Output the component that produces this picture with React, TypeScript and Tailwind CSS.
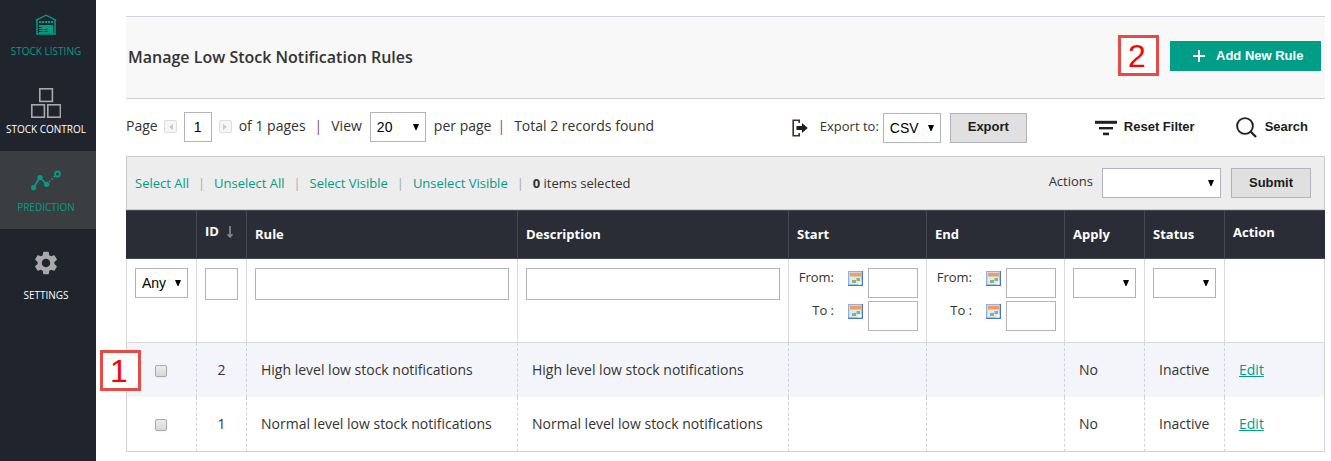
import React from "react";
import { MdSettings } from "react-icons/md";

function WarehouseIcon() {
  return (
    <svg width="22" height="21" viewBox="0 0 22 21" fill="none" stroke="currentColor" aria-hidden="true">
      <path d="M0.8 6.4 11 1.2 21.2 6.4" strokeWidth="1.4" />
      <path d="M2 6v14h18V6" strokeWidth="1.5" />
      <path d="M4 8h14" strokeWidth="2" strokeDasharray="2.2 0.8" />
      <path d="M4 11h14v8.5H4z" fill="currentColor" stroke="none" />
      <path d="M4 13.5h3M4 15.5h4M9 15.5h4M4 17.5h4M9 17.5h4" stroke="#20242d" strokeWidth="1" />
    </svg>
  );
}

function BoxesIcon() {
  return (
    <svg width="30" height="30" viewBox="0 0 30 30" fill="none" stroke="#a9a9a9" strokeWidth="1.6" aria-hidden="true">
      <rect x="8.8" y="0.8" width="12.6" height="12.6" />
      <rect x="0.8" y="16.8" width="12.6" height="12.4" />
      <rect x="16.8" y="16.8" width="12.6" height="12.4" />
    </svg>
  );
}

function PredictionIcon() {
  return (
    <svg width="30" height="21" viewBox="0 0 30 21" fill="none" stroke="currentColor" aria-hidden="true">
      <path d="M2.6 17.6 9 7.5l6.6 7" strokeWidth="1.8" />
      <path d="M15.6 14.5 24 6" strokeWidth="1.8" strokeDasharray="1.6 1.8" />
      <circle cx="2.6" cy="17.6" r="2.6" fill="currentColor" stroke="none" />
      <circle cx="9" cy="7.5" r="2.6" fill="currentColor" stroke="none" />
      <circle cx="15.6" cy="14.3" r="2.6" fill="currentColor" stroke="none" />
      <circle cx="26.5" cy="4" r="2.5" strokeWidth="1.8" />
    </svg>
  );
}

function ExportIcon() {
  return (
    <svg width="16" height="18" viewBox="0 0 16 18" fill="none" aria-hidden="true">
      <path d="M7.2 4V1.2H1.2v15.6h6V14" stroke="#3a3427" strokeWidth="1.6" />
      <path d="M4.5 7H10V4L15.8 9 10 14v-3H4.5z" fill="#231f20" />
    </svg>
  );
}

function FilterIcon() {
  return (
    <svg width="22" height="16" viewBox="0 0 22 16" fill="#231f20" aria-hidden="true">
      <rect x="0" y="0.8" width="22" height="3" />
      <rect x="4" y="7" width="14" height="2.4" />
      <rect x="8" y="12.6" width="6" height="2.6" />
    </svg>
  );
}

function SearchIcon() {
  return (
    <svg width="21" height="21" viewBox="0 0 21 21" fill="none" stroke="#231f20" aria-hidden="true">
      <circle cx="9" cy="9" r="7.9" strokeWidth="1.9" />
      <path d="M14.3 14.3 20 20" strokeWidth="2.3" />
    </svg>
  );
}

function CalendarIcon() {
  return (
    <svg width="15" height="15" viewBox="0 0 15 15" aria-hidden="true">
      <rect x="0.5" y="0.5" width="14" height="14" fill="#c6d9f2" stroke="#8fb1e0" />
      <path d="M0 14.4h15M14.4 0v15" stroke="#4a78bd" strokeWidth="1.2" />
      <rect x="2" y="2" width="11" height="11" fill="#dfe9f7" />
      <rect x="2" y="2" width="11" height="3.5" fill="#fb9a5b" />
      <rect x="8.5" y="7" width="3.5" height="3" fill="#7fba77" />
      <rect x="4" y="9" width="4" height="3" fill="#7fba77" />
      <path d="M9.5 13.5 13.5 9.5v4z" fill="#f4f8fd" />
    </svg>
  );
}

function SortArrow() {
  return (
    <svg width="6" height="12" viewBox="0 0 6 12" fill="none" stroke="#8a909c" aria-hidden="true">
      <path d="M3 0v11" strokeWidth="1.6" />
      <path d="M0.5 8.3 3 11l2.5-2.7" strokeWidth="1.4" />
    </svg>
  );
}

const control =
  "border border-[#b1b3bf] bg-white font-['Liberation_Sans',sans-serif] text-sm text-black outline-none focus:border-[#009d87]";

function Select({ label, id, options, className = "" }: { label?: string; id?: string; options: string[]; className?: string }) {
  return (
    <div className={`relative ${className}`}>
      <select id={id} aria-label={label} className={`${control} h-[30px] w-full appearance-none rounded-none pl-1.5 pr-4`}>
        {options.map((o) => (
          <option key={o}>{o}</option>
        ))}
      </select>
      <svg className="pointer-events-none absolute right-[7px] top-3" width="6" height="6" viewBox="0 0 6 6" aria-hidden="true">
        <path d="M0 0h6L3.5 6h-1z" fill="#000" />
      </svg>
    </div>
  );
}

function PagerButton({ label, dir }: { label: string; dir: "prev" | "next" }) {
  return (
    <button aria-label={label} className="flex size-[13px] items-center justify-center rounded-xs border border-[#dedede] bg-[#f6f6f6]">
      <svg width="5" height="6" viewBox="0 0 5 6" aria-hidden="true">
        <path d={dir === "prev" ? "M5 0v6L1 3z" : "M0 0v6l4-3z"} fill="#c9c9c9" />
      </svg>
    </button>
  );
}

const greyButton =
  "h-[30px] border border-[#b1b3bf] bg-[#e0e0e0] text-center font-['Liberation_Sans',sans-serif] text-[13px] font-bold text-[#1c1c1c]";
const plainButton = "flex items-center font-['Liberation_Sans',sans-serif] text-[13px] font-bold text-[#1c1c1c]";

function Callout({ n }: { n: number }) {
  return (
    <span className="flex size-[41px] items-center justify-center border-3 border-[#e84b45] bg-white pr-[3px] font-['Liberation_Sans',sans-serif] text-[32px] leading-none text-[#ff0000]">
      {n}
    </span>
  );
}

function NavItem({ icon, label, className }: { icon: React.ReactNode; label: string; className: string }) {
  return (
    <a href="#" className={`flex flex-col items-center justify-end pb-3.5 pr-1 ${className}`}>
      {icon}
      <span className="text-[10px] leading-4">{label}</span>
    </a>
  );
}

function DateRange({ name }: { name: string }) {
  return (
    <div className="flex flex-col gap-[3px]">
      {["From:", "To :"].map((l) => (
        <div key={l} className="flex justify-end">
          <label htmlFor={`${name}-${l[0]}`} className="grow pr-3.5 text-right text-[13px] leading-[18px]">
            {l}
          </label>
          <button aria-label={`Pick ${name} date`} className="mr-[5px] mt-[3px] h-[15px]">
            <CalendarIcon />
          </button>
          <input id={`${name}-${l[0]}`} className={`${control} h-[30px] w-[50px]`} />
        </div>
      ))}
    </div>
  );
}

const rules = [
  { id: 2, rule: "High level low stock notifications" },
  { id: 1, rule: "Normal level low stock notifications" },
];

const th = "border-y border-r border-y-[#444852] px-2 text-left align-middle";
const ft = "border-r border-b border-[#dadada] px-2 pt-[9px] text-left align-top font-normal";
const td = "border-r border-[#cfd2da] [border-right-style:dashed]";

export default function App() {
  return (
    <div className="flex min-h-screen bg-white font-['Open_Sans',sans-serif] text-[#333]">
      <nav className="w-24 shrink-0 bg-[#20242d] text-white">
        <NavItem icon={<WarehouseIcon />} label="STOCK LISTING" className="h-[73px] gap-2 text-[#009d87]" />
        <NavItem icon={<BoxesIcon />} label="STOCK CONTROL" className="h-[78px] gap-[3px]" />
        <NavItem icon={<PredictionIcon />} label="PREDICTION" className="h-[78px] gap-2 bg-[#3b3e40] text-[#009d87]" />
        <NavItem icon={<MdSettings size={28} color="#a9a9a9" />} label="SETTINGS" className="h-[88px] gap-2.5" />
      </nav>

      <main className="min-w-0 grow pb-2 pl-[30px] pr-1.5 pt-4">
        <header className="flex h-[83px] items-center border-y border-[#d0d3dc] bg-[#f8f8f8] pb-1 pl-0.5 pr-1">
          <h1 className="grow pt-0.5 text-base font-semibold">Manage Low Stock Notification Rules</h1>
          <Callout n={2} />
          <button className="ml-[11px] flex h-[30px] w-[151px] items-center bg-[#009d87] pl-[23px] font-['Liberation_Sans',sans-serif] text-[13px] font-bold text-white">
            <svg width="12" height="12" viewBox="0 0 12 12" stroke="#fff" strokeWidth="2" aria-hidden="true">
              <path d="M6 0v12M0 6h12" />
            </svg>
            <span className="pl-[11px]">Add New Rule</span>
          </button>
        </header>

        <div className="flex h-[57px] items-center pb-0.5 pr-[17px] text-sm">
          <label htmlFor="page" className="pb-0.5 pr-1.5">Page</label>
          <PagerButton label="Previous page" dir="prev" />
          <input id="page" defaultValue="1" className={`${control} mx-[7px] h-[30px] w-7 text-center`} />
          <PagerButton label="Next page" dir="next" />
          <span className="pb-0.5 pl-[7px]">of 1 pages</span>
          <span className="px-[9px] pb-0.5 text-[#8a4b66]">|</span>
          <label htmlFor="view" className="pb-0.5 pr-2">View</label>
          <Select id="view" options={["20", "50", "100"]} className="w-14" />
          <span className="pb-0.5 pl-2">per page</span>
          <span className="pb-0.5 pl-1.5 pr-[9px] text-[#8a4b66]">|</span>
          <span className="pb-0.5">Total 2 records found</span>
          <div className="ml-auto flex items-center pt-0.5">
            <ExportIcon />
            <label htmlFor="export" className="pb-0.5 pl-3 pr-1 text-[13px]">Export to:</label>
            <Select id="export" options={["CSV", "XML"]} className="w-[58px]" />
            <button className={`${greyButton} ml-[9px] w-[77px]`}>Export</button>
            <button className={`${plainButton} ml-[68px] gap-[7px]`}>
              <FilterIcon />
              Reset Filter
            </button>
            <button className={`${plainButton} ml-[41px] gap-2`}>
              <SearchIcon />
              Search
            </button>
          </div>
        </div>

        <div className="flex h-[54px] items-center border border-[#ccc] bg-[#ededed] pl-2 pr-[13px] text-[13px]">
          {["Select All", "Unselect All", "Select Visible", "Unselect Visible"].map((l) => (
            <React.Fragment key={l}>
              <a href="#" className="pt-0.5 text-[#009d87]">{l}</a>
              <span className="w-[25px] pt-0.5 text-center text-[#aaa]">|</span>
            </React.Fragment>
          ))}
          <span className="pt-0.5">
            <b>0</b> items selected
          </span>
          <label htmlFor="actions" className="ml-auto pb-0.5 pr-[9px]">Actions</label>
          <Select id="actions" options={["", "Delete"]} className="w-[119px]" />
          <button className={`${greyButton} ml-2.5 w-20`}>Submit</button>
        </div>

        <table className="w-full table-fixed border-separate border-spacing-0">
          <colgroup>
            <col className="w-[71px]" />
            <col className="w-[50px]" />
            <col />
            <col />
            <col className="w-[138px]" />
            <col className="w-[138px]" />
            <col className="w-20" />
            <col className="w-20" />
            <col className="w-[100px]" />
          </colgroup>
          <thead>
            <tr className="h-[49px] bg-[#2a2d36] text-[13px] font-bold text-white">
              <th className={`${th} border-r-[#444852]`} aria-label="Select" />
              <th className={`${th} border-r-[#444852] pb-1.5`}>
                <span className="flex items-center gap-2">
                  ID <SortArrow />
                </span>
              </th>
              {["Rule", "Description", "Start", "End", "Apply", "Status"].map((h) => (
                <th key={h} className={`${th} border-r-[#444852]`}>{h}</th>
              ))}
              <th className={`${th} border-r-[#2a2d36] pb-1`}>Action</th>
            </tr>
            <tr className="h-[84px]">
              <td className={`${ft} border-l`}>
                <Select label="Filter selection" options={["Any", "Yes", "No"]} />
              </td>
              <td className={ft}>
                <input aria-label="Filter ID" className={`${control} block h-8 w-full`} />
              </td>
              <td className={ft}>
                <input aria-label="Filter rule" className={`${control} block h-8 w-full`} />
              </td>
              <td className={ft}>
                <input aria-label="Filter description" className={`${control} block h-8 w-full`} />
              </td>
              <td className={ft}>
                <DateRange name="start" />
              </td>
              <td className={ft}>
                <DateRange name="end" />
              </td>
              <td className={ft}>
                <Select label="Filter apply" options={["", "Yes", "No"]} />
              </td>
              <td className={ft}>
                <Select label="Filter status" options={["", "Active", "Inactive"]} />
              </td>
              <td className={ft} />
            </tr>
          </thead>
          <tbody>
            {rules.map((r) => (
              <tr key={r.id} className="h-[54px] text-sm odd:bg-[#f4f5fb] last:h-[55px] last:[&>td]:border-b">
                <td className={`${td} relative border-l pr-0.5 pt-0.5`}>
                  <input
                    type="checkbox"
                    aria-label={`Select rule ${r.id}`}
                    className="mx-auto block size-3 appearance-none rounded-xs border border-[#a9a9a9] bg-linear-to-b from-[#ececec] to-[#d8d8d8] shadow-xs checked:bg-[#009d87]"
                  />
                  {r.id === 2 && (
                    <div className="absolute -left-[27px] top-[7px]">
                      <Callout n={1} />
                    </div>
                  )}
                </td>
                <td className={`${td} text-center`}>{r.id}</td>
                <td className={`${td} pl-3.5`}>{r.rule}</td>
                <td className={`${td} pl-3.5`}>{r.rule}</td>
                <td className={td} />
                <td className={td} />
                <td className={`${td} pl-3.5`}>No</td>
                <td className={`${td} pl-3.5`}>Inactive</td>
                <td className="border-r border-[#cfd2da] pl-3.5">
                  <a href="#" className="text-[#009d87] underline">Edit</a>
                </td>
              </tr>
            ))}
          </tbody>
        </table>
      </main>
    </div>
  );
}
